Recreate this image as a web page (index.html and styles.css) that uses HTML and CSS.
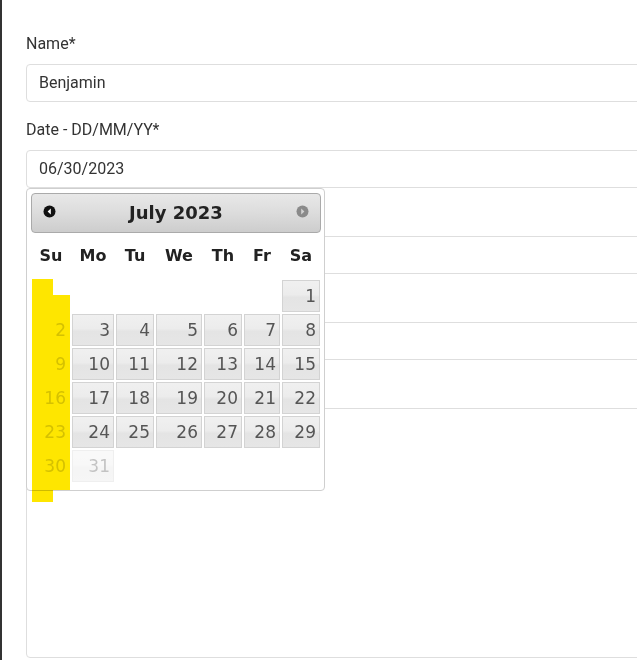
FILE: index.html
```html
<!DOCTYPE html>
<html lang="en">
<head>
<meta charset="utf-8">
<title>Form with datepicker</title>
<link rel="stylesheet" href="styles.css">
</head>
<body>
<div class="frame">
  <form class="form">
    <div class="group">
      <label class="label">Name*</label>
      <input class="control" type="text" value="Benjamin">
    </div>
    <div class="group date-field">
      <label class="label">Date - DD/MM/YY*</label>
      <input class="control" type="text" value="06/30/2023">
      <div class="dp">
        <div class="dp-header">
          <span class="dp-nav">
            <svg width="13" height="13" viewBox="0 0 13 13"><circle cx="6.5" cy="6.5" r="6" fill="#111"/><path d="M7.8 3.6 L4.6 6.5 L7.8 9.4 Z" fill="#fff"/></svg>
          </span>
          <span class="dp-title">July 2023</span>
          <span class="dp-nav">
            <svg width="13" height="13" viewBox="0 0 13 13"><circle cx="6.5" cy="6.5" r="6" fill="#8a8a8a"/><path d="M5.2 3.6 L8.4 6.5 L5.2 9.4 Z" fill="#d2d2d2"/></svg>
          </span>
        </div>
        <table class="dp-table">
          <colgroup>
            <col class="c40"><col class="c44"><col class="c40"><col class="c48"><col class="c40"><col class="c38"><col class="c40">
          </colgroup>
          <thead>
            <tr><th>Su</th><th>Mo</th><th>Tu</th><th>We</th><th>Th</th><th>Fr</th><th>Sa</th></tr>
          </thead>
          <tbody>
            <tr><td></td><td></td><td></td><td></td><td></td><td></td><td><a class="day">1</a></td></tr>
            <tr><td><a class="day sun">2</a></td><td><a class="day">3</a></td><td><a class="day">4</a></td><td><a class="day">5</a></td><td><a class="day">6</a></td><td><a class="day">7</a></td><td><a class="day">8</a></td></tr>
            <tr><td><a class="day sun">9</a></td><td><a class="day">10</a></td><td><a class="day">11</a></td><td><a class="day">12</a></td><td><a class="day">13</a></td><td><a class="day">14</a></td><td><a class="day">15</a></td></tr>
            <tr><td><a class="day sun">16</a></td><td><a class="day">17</a></td><td><a class="day">18</a></td><td><a class="day">19</a></td><td><a class="day">20</a></td><td><a class="day">21</a></td><td><a class="day">22</a></td></tr>
            <tr><td><a class="day sun">23</a></td><td><a class="day">24</a></td><td><a class="day">25</a></td><td><a class="day">26</a></td><td><a class="day">27</a></td><td><a class="day">28</a></td><td><a class="day">29</a></td></tr>
            <tr><td><a class="day sun">30</a></td><td><a class="day disabled">31</a></td><td></td><td></td><td></td><td></td><td></td></tr>
          </tbody>
        </table>
      </div>
    </div>
    <div class="group">
      <label class="label">&nbsp;</label>
      <input class="control" type="text" value="">
    </div>
    <div class="group">
      <label class="label">&nbsp;</label>
      <input class="control" type="text" value="">
    </div>
    <div class="group">
      <label class="label">&nbsp;</label>
      <textarea class="control area"></textarea>
    </div>
  </form>
  <div class="hl"></div>
</div>
</body>
</html>
```
FILE: styles.css
```css
html, body {
  margin: 0;
  padding: 0;
  background: #fff;
}
body {
  width: 637px;
  height: 660px;
  overflow: hidden;
}
.frame {
  position: relative;
  height: 660px;
  border-left: 2px solid #333;
  padding-left: 24px;
  font-family: Roboto, "Liberation Sans", sans-serif;
  color: #333;
}
.form {
  padding-top: 32px;
  width: 720px;
}
.group {
  margin-bottom: 16px;
  display: flex;
  flex-direction: column;
}
.label {
  font-size: 16px;
  line-height: 24px;
  margin-bottom: 8px;
  color: #333;
}
.control {
  box-sizing: border-box;
  height: 38px;
  width: 100%;
  margin: 0;
  padding: 0 12px 1px 12px;
  border: 1px solid #dedede;
  border-radius: 4px;
  font-family: Roboto, "Liberation Sans", sans-serif;
  font-size: 16px;
  color: #333;
  background: #fff;
  outline: none;
}
.area {
  height: 250px;
  resize: none;
}
.date-field {
  position: relative;
}

/* datepicker */
.dp {
  position: absolute;
  top: 100%;
  left: 0;
  z-index: 10;
  width: 290px;
  padding: 4px 3px 7px 4px;
  border: 1px solid #cfcfcf;
  border-radius: 4px;
  background: #fff;
  font-family: "DejaVu Sans", Verdana, sans-serif;
}
.dp-header {
  box-sizing: border-box;
  height: 40px;
  display: flex;
  align-items: center;
  padding: 0 11px 3px 11px;
  border: 1px solid #aaa;
  border-radius: 4px;
  background: linear-gradient(to bottom, #e8e8e8 0%, #dcdcdc 50%, #cdcdcd 100%);
}
.dp-nav {
  display: flex;
  width: 13px;
  height: 13px;
}
.dp-title {
  flex: 1;
  text-align: center;
  font-weight: bold;
  font-size: 18px;
  line-height: 38px;
  margin-top: 3px;
  color: #222;
}
.dp-table {
  width: 290px;
  table-layout: fixed;
  border-collapse: separate;
  border-spacing: 0;
}
.c40 { width: 40px; }
.c44 { width: 44px; }
.c48 { width: 48px; }
.c38 { width: 38px; }
.dp-table th {
  height: 46px;
  padding: 0;
  font-size: 16px;
  font-weight: bold;
  line-height: 46px;
  text-align: center;
  color: #222;
}
.dp-table td {
  height: 34px;
  padding: 1px;
  box-sizing: border-box;
}
.day {
  display: block;
  box-sizing: border-box;
  height: 32px;
  padding-right: 3px;
  border: 1px solid #d3d3d3;
  background: linear-gradient(to bottom, #f0f0f0 0%, #ececec 45%, #e4e4e4 55%, #e6e6e6 100%);
  color: #555;
  font-size: 17px;
  line-height: 30px;
  text-align: right;
}
.day.disabled {
  opacity: 0.35;
}
.day.sun {
  border-color: transparent;
  background: transparent;
  color: #d6d6d6;
}

/* yellow highlighter annotation */
.hl {
  position: absolute;
  z-index: 20;
  left: 30px;
  top: 279px;
  width: 38px;
  height: 223px;
  background: #fee600;
  mix-blend-mode: multiply;
  clip-path: polygon(0 0, 21px 0, 21px 16px, 38px 16px, 38px 211px, 21px 211px, 21px 223px, 0 223px);
}
```
